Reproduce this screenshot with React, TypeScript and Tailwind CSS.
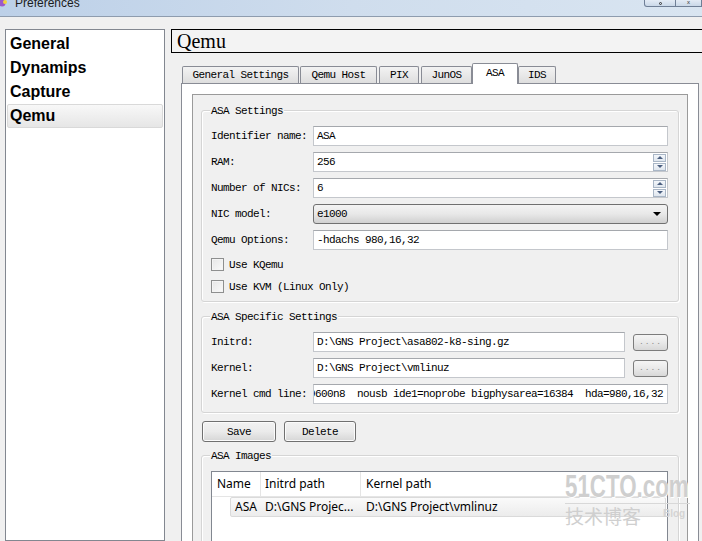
import type { ReactNode } from "react";

const mono = "font-['Liberation_Mono',monospace] text-[11px] tracking-[-0.6px]";

function TitleBar() {
  return (
    <div className="flex h-[17px] shrink-0 items-start border-b border-[#8e9cae] bg-gradient-to-r from-[#bcd0e8] via-[#cfdded] to-[#d9e5f1]">
      <svg width="8" height="10" viewBox="0 0 8 10" className="mt-[-1px]">
        <circle cx="2" cy="4" r="3.5" fill="#9b59c9" />
        <circle cx="5" cy="3" r="2" fill="#f2d23a" />
      </svg>
      <div className="ml-[7px] mt-[-4px] text-[12px] leading-[14px] text-[#1b1b1b] font-['Liberation_Sans',sans-serif]">
        Preferences
      </div>
      <div className="ml-auto flex">
        <div className="flex h-[7px] w-[32px] items-end justify-center rounded-bl-[3px] border border-t-0 border-[#6f7f96] bg-gradient-to-b from-[#e3ebf5] to-[#cad8e8]">
          <span className="mb-[1px] h-[3px] w-[3px] rounded-full border border-[#333]" />
        </div>
        <div className="flex h-[7px] w-[26px] items-end justify-center border border-l-0 border-t-0 border-[#6f7f96] bg-gradient-to-b from-[#e3ebf5] to-[#cad8e8]">
          <span className="mb-[1px] text-[6px] leading-[6px] text-[#333]">x</span>
        </div>
      </div>
    </div>
  );
}

function Sidebar() {
  const items = ["General", "Dynamips", "Capture", "Qemu"];
  return (
    <div className="ml-[5px] w-[160px] shrink-0 border border-[#828790] bg-white pt-[2px]">
      {items.map((item) => (
        <div
          key={item}
          className={
            item === "Qemu"
              ? "mx-[1px] flex h-[24px] items-center rounded-[2px] border border-[#d9d9d9] bg-gradient-to-b from-[#f8f8f8] to-[#e6e6e6] pl-[2px] text-[16px] font-bold"
              : "flex h-[24px] items-center pl-[4px] text-[16px] font-bold"
          }
        >
          {item}
        </div>
      ))}
    </div>
  );
}

function Tabs() {
  const tabs = [
    { label: "General Settings", w: "w-[117px]", gap: "" },
    { label: "Qemu Host", w: "w-[77px]", gap: "ml-[1px]" },
    { label: "PIX", w: "w-[40px]", gap: "ml-[2px]" },
    { label: "JunOS", w: "w-[51px]", gap: "ml-[2px]" },
    { label: "ASA", w: "w-[46px]", gap: "" },
    { label: "IDS", w: "w-[38px]", gap: "" },
  ];
  return (
    <div className={`relative z-10 mt-[10px] -mb-[1px] flex h-[21px] items-end pl-[11px] ${mono}`}>
      {tabs.map((t) =>
        t.label === "ASA" ? (
          <div
            key={t.label}
            className={`flex h-[21px] ${t.w} shrink-0 items-center justify-center rounded-t-[2px] border border-b-0 border-[#898c95] bg-white pb-[1px]`}
          >
            {t.label}
          </div>
        ) : (
          <div
            key={t.label}
            className={`mb-[1px] flex h-[17px] ${t.w} ${t.gap} shrink-0 items-center justify-center rounded-t-[2px] border border-b-0 border-[#898c95] bg-gradient-to-b from-[#f3f3f3] to-[#dedede] pt-[1px]`}
          >
            {t.label}
          </div>
        )
      )}
    </div>
  );
}

function TextBox({ children, className = "" }: { children?: ReactNode; className?: string }) {
  return (
    <div
      className={`flex h-[20px] min-w-0 items-center overflow-hidden whitespace-pre border border-[#c4c7cc] border-t-[#a5a8ad] bg-white pl-[3px] ${className}`}
    >
      {children}
    </div>
  );
}

function Spinner() {
  return (
    <div className="ml-auto mr-[1px] flex h-[17px] w-[13px] flex-col">
      <div className="flex h-[8px] items-center justify-center border border-[#a9b6c6] bg-gradient-to-b from-[#f4f7fb] to-[#dfe6ee]">
        <span className="h-0 w-0 border-x-[3px] border-b-[3px] border-x-transparent border-b-[#4b5f80]" />
      </div>
      <div className="mt-[1px] flex h-[8px] items-center justify-center border border-[#a9b6c6] bg-gradient-to-b from-[#f4f7fb] to-[#dfe6ee]">
        <span className="h-0 w-0 border-x-[3px] border-t-[3px] border-x-transparent border-t-[#4b5f80]" />
      </div>
    </div>
  );
}

function Row({ label, children }: { label: string; children: ReactNode }) {
  return (
    <div className="flex h-[20px] items-center">
      <div className="w-[102px] shrink-0 whitespace-pre">{label}</div>
      <div className="flex min-w-0 flex-1 items-center">{children}</div>
    </div>
  );
}

function Check({ label }: { label: string }) {
  return (
    <div className="flex h-[13px] items-center">
      <span className="h-[13px] w-[13px] shrink-0 border border-[#8e8f8f] bg-gradient-to-br from-[#e6e6e6] to-[#fafafa] shadow-[inset_0_0_0_1px_#f4f4f4]" />
      <span className="ml-[5px] whitespace-pre">{label}</span>
    </div>
  );
}

function Group({ title, children, className = "" }: { title: string; children: ReactNode; className?: string }) {
  return (
    <div
      className={`mx-[8px] rounded-[3px] border border-[#d5d5d5] px-[9px] pr-[10px] shadow-[inset_1px_1px_0_#ffffff,1px_1px_0_#ffffff] ${className}`}
    >
      <div className="-mt-[8px] mb-[8px] h-[15px] w-fit bg-[#f0f0f0] px-[1px] -ml-[1px] pt-[1px] leading-[14px]">{title}</div>
      {children}
    </div>
  );
}

function SmallButton() {
  return (
    <div className="ml-[8px] flex h-[17px] w-[35px] shrink-0 items-center justify-center rounded-[3px] border border-[#7c7c7c] bg-gradient-to-b from-[#f5f5f5] via-[#e9e9e9] to-[#d8d8d8] text-[8px] leading-[8px] tracking-[1px] text-[#8a8a8a]">
      ....
    </div>
  );
}

function Button({ label, w }: { label: string; w: string }) {
  return (
    <div
      className={`flex h-[21px] ${w} items-center justify-center rounded-[3px] border border-[#707070] bg-gradient-to-b from-[#f2f2f2] via-[#ebebeb] to-[#d6d6d6] pt-[1px] shadow-[inset_0_0_0_1px_#fbfbfb]`}
    >
      {label}
    </div>
  );
}

function ImageTree() {
  return (
    <div className="h-[90px] border border-[#828790] bg-white font-['Noto_Sans',sans-serif] text-[12px] tracking-normal text-black">
      <div className="flex h-[25px] items-center border-b border-[#e5e5e5]">
        <div className="flex h-full w-[49px] items-center border-r border-[#e5e5e5] pl-[5px]">Name</div>
        <div className="flex h-full w-[100px] items-center border-r border-[#e5e5e5] pl-[4px]">Initrd path</div>
        <div className="flex h-full flex-1 items-center pl-[5px]">Kernel path</div>
      </div>
      <div className="ml-[18px] mr-[1px] flex h-[20px] items-center rounded-[2px] border border-[#dadada] bg-gradient-to-b from-[#fafafa] to-[#ececec] whitespace-pre">
        <div className="w-[34px] pl-[4px]">ASA</div>
        <div className="w-[101px]">D:\GNS Projec...</div>
        <div>D:\GNS Project\vmlinuz</div>
      </div>
    </div>
  );
}

function Pane() {
  return (
    <div className="ml-[10px] w-[518px] flex-1 border border-[#898c95] bg-white p-[10px] pb-0">
      <div className={`h-full border border-[#9a9a9a] bg-[#f0f0f0] ${mono} leading-[14px]`}>
        <Group title="ASA Settings" className="mt-[15px] pb-[8px]">
          <div className="flex flex-col gap-[6px]">
            <Row label="Identifier name:">
              <TextBox className="flex-1">ASA</TextBox>
            </Row>
            <Row label="RAM:">
              <TextBox className="flex-1">
                256
                <Spinner />
              </TextBox>
            </Row>
            <Row label="Number of NICs:">
              <TextBox className="flex-1">
                6
                <Spinner />
              </TextBox>
            </Row>
            <Row label="NIC model:">
              <div className="flex h-[20px] flex-1 items-center rounded-[3px] border border-[#707070] bg-gradient-to-b from-[#f4f4f4] via-[#e8e8e8] to-[#d0d0d0] pl-[3px]">
                e1000
                <span className="ml-auto mr-[6px] h-0 w-0 border-x-[4px] border-t-[4px] border-x-transparent border-t-black" />
              </div>
            </Row>
            <Row label="Qemu Options:">
              <TextBox className="flex-1">-hdachs 980,16,32</TextBox>
            </Row>
          </div>
          <div className="mt-[8px] flex flex-col gap-[9px]">
            <Check label="Use KQemu" />
            <Check label="Use KVM (Linux Only)" />
          </div>
        </Group>

        <Group title="ASA Specific Settings" className="mt-[14px] pb-[8px]">
          <div className="flex flex-col gap-[6px]">
            <Row label="Initrd:">
              <TextBox className="w-[312px]">D:\GNS Project\asa802-k8-sing.gz</TextBox>
              <SmallButton />
            </Row>
            <Row label="Kernel:">
              <TextBox className="w-[312px]">D:\GNS Project\vmlinuz</TextBox>
              <SmallButton />
            </Row>
            <Row label="Kernel cmd line:">
              <TextBox className="flex-1 justify-end pl-0 pr-[4px]">
                console=ttyS0,9600n8  nousb ide1=noprobe bigphysarea=16384  hda=980,16,32
              </TextBox>
            </Row>
          </div>
        </Group>

        <div className="ml-[9px] mt-[8px] flex gap-[8px]">
          <Button label="Save" w="w-[74px]" />
          <Button label="Delete" w="w-[72px]" />
        </div>

        <Group title="ASA Images" className="mt-[13px] pb-[8px]">
          <ImageTree />
        </Group>
      </div>
    </div>
  );
}

export default function App() {
  return (
    <div className="relative flex h-[541px] w-[702px] flex-col overflow-hidden bg-[#f0f0f0] font-['Liberation_Sans',sans-serif] text-black">
      <TitleBar />
      <div className="flex min-h-0 flex-1 pt-[12px]">
        <Sidebar />
        <div className="ml-[6px] flex min-w-0 flex-1 flex-col">
          <div className="flex h-[24px] w-[540px] shrink-0 items-center border border-black bg-[#f3f3f3] pl-[5px] font-['Liberation_Serif',serif] text-[20px]">
            Qemu
          </div>
          <Tabs />
          <Pane />
        </div>
      </div>

      {/* watermark */}
      <div className="pointer-events-none absolute left-[565px] top-[472px] text-[#cfcfcf]">
        <div className="origin-left scale-x-[0.72] whitespace-nowrap text-[31px] font-bold leading-[30px] [text-shadow:1px_1px_0_#ffffff]">
          51CTO.com
        </div>
        <div className="mt-[1px] h-px w-[125px] bg-[#d8d8d8]" />
        <div className="flex items-start">
          <span className="font-['Noto_Sans_CJK_SC',sans-serif] text-[19px] leading-[24px]">技术博客</span>
          <span className="ml-[22px] mt-[2px] text-[10px] font-bold text-[#d4d4d4]">Blog</span>
        </div>
      </div>
    </div>
  );
}
